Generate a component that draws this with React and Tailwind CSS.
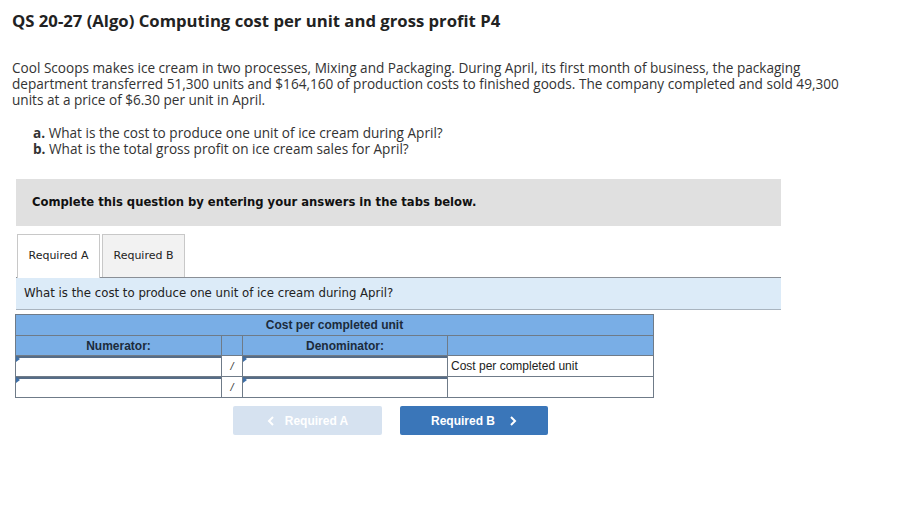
import React from 'react';

const QUESTIONS = [
  ['a.', 'What is the cost to produce one unit of ice cream during April?'],
  ['b.', 'What is the total gross profit on ice cream sales for April?'],
];

function Marker() {
  return (
    <span className="absolute left-0 top-0 w-0 h-0 border-t-[3px] border-b-[3px] border-l-[4px] border-t-transparent border-b-transparent border-l-[#3d6fa8]" />
  );
}

function InputCell() {
  return (
    <td className="p-0 border border-[#6f7b88] h-[21px] relative">
      <div className="h-full border-t-2 border-[#566c86] bg-white" />
      <Marker />
    </td>
  );
}

function Chevron({ dir }) {
  return (
    <svg width="8" height="10" viewBox="0 0 8 10" fill="none">
      <path
        d={dir === 'left' ? 'M6 1 L2 5 L6 9' : 'M2 1 L6 5 L2 9'}
        stroke="currentColor"
        strokeWidth="2"
      />
    </svg>
  );
}

export default function App() {
  return (
    <div className="w-[901px] h-[511px] bg-white text-[#333] font-['Open_Sans','Lato',sans-serif]">
      <div className="pl-3 pt-[11px]">
        <h1 className="text-[16.7px] font-bold text-[#222] leading-[20px]">
          QS 20-27 (Algo) Computing cost per unit and gross profit P4
        </h1>

        <p className="mt-[29px] w-[835px] text-[13.6px] leading-[16px]">
          Cool Scoops makes ice cream in two processes, Mixing and Packaging. During April, its first month of
          business, the packaging
          <br />
          department transferred 51,300 units and $164,160 of production costs to finished goods. The company
          completed and sold 49,300
          <br />
          units at a price of $6.30 per unit in April.
        </p>

        <div className="mt-[17px] pl-[21px] text-[13.6px] leading-[16px]">
          {QUESTIONS.map(([label, text]) => (
            <div key={label}>
              <span className="font-bold">{label}</span> {text}
            </div>
          ))}
        </div>
      </div>

      <div className="ml-4 w-[765px] font-['DejaVu_Sans','Verdana',sans-serif]">
        <div className="mt-[22px] h-[47px] bg-[#e0e0e0] flex items-center pl-4">
          <span className="text-[11.6px] font-bold text-[#111]">
            Complete this question by entering your answers in the tabs below.
          </span>
        </div>

        <div className="mt-[8px] flex items-end gap-[2px] border-b border-[#8a8f96] pl-px">
          <div className="w-[83px] h-[44px] -mb-px bg-white border border-b-0 border-[#c8c8c8] flex items-center justify-center text-[11px] text-[#222]">
            Required A
          </div>
          <div className="w-[83px] h-[43px] bg-[#f2f2f2] border border-b-0 border-[#c8c8c8] flex items-center justify-center text-[11px] text-[#222]">
            Required B
          </div>
        </div>

        <div className="h-[32px] bg-[#dcebf8] border-b border-[#a9b4bf] flex items-center pl-2 text-[11.75px] text-[#222]">
          What is the cost to produce one unit of ice cream during April?
        </div>
      </div>

      <div className="ml-[15px] mt-[4px] font-['Liberation_Sans','Arial',sans-serif] text-[12px]">
        <table className="border-collapse border border-[#6f7b88] w-[638px] table-fixed">
          <colgroup>
            <col className="w-[206px]" />
            <col className="w-[21px]" />
            <col className="w-[205px]" />
            <col className="w-[206px]" />
          </colgroup>
          <thead>
            <tr className="bg-[#79aee6] h-[21px]">
              <th colSpan={4} className="border border-[#6f7b88] font-bold text-[#1c2b3c] text-center">
                Cost per completed unit
              </th>
            </tr>
            <tr className="bg-[#79aee6] h-[20px]">
              <th className="border border-[#6f7b88] font-bold text-[#1c2b3c]">Numerator:</th>
              <th className="border border-[#6f7b88]" />
              <th className="border border-[#6f7b88] font-bold text-[#1c2b3c]">Denominator:</th>
              <th className="border border-[#6f7b88]" />
            </tr>
          </thead>
          <tbody>
            {['Cost per completed unit', ''].map((label, i) => (
              <tr key={i} className="h-[21px]">
                <InputCell />
                <td className="border border-[#6f7b88] text-center text-[11px] text-[#333] italic">/</td>
                <InputCell />
                <td className="border border-[#6f7b88] pl-[3px] text-[#222]">{label}</td>
              </tr>
            ))}
          </tbody>
        </table>

        <div className="mt-[8px] flex gap-[18px] pl-[218px]">
          <button className="w-[149px] h-[29px] bg-[#d6e2f0] text-white font-bold text-[12px] flex items-center justify-center gap-[10px] rounded-[2px]">
            <Chevron dir="left" /> Required A
          </button>
          <button className="w-[148px] h-[29px] bg-[#3a76b9] text-white font-bold text-[12px] flex items-center justify-center gap-[14px] rounded-[2px]">
            Required B <Chevron dir="right" />
          </button>
        </div>
      </div>
    </div>
  );
}
